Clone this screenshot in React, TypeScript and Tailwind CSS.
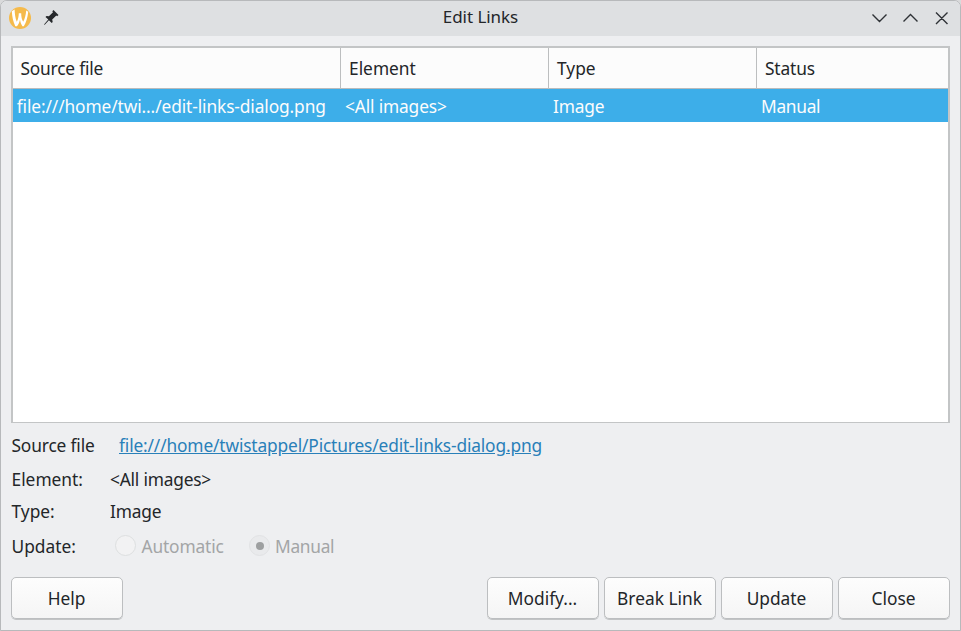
import type { ReactNode } from "react";

function Button({ children }: { children: ReactNode }) {
  return (
    <button className="h-[42px] w-[112px] rounded-[5px] border border-[#bcbec0] bg-linear-to-b from-[#fdfdfd] to-[#f5f5f5] pr-px pt-px leading-none shadow-[0_1px_0_#c2c4c5]">
      {children}
    </button>
  );
}

function AppIcon() {
  return (
    <svg width="22" height="22" viewBox="0 0 22 22">
      <circle cx="11" cy="11" r="11" fill="#f5ba4b" />
      <path
        d="M2.800 4.200L5.600 2.500C5.800 7 6.300 11 7.800 14.800C9.300 12 9.700 9 9.800 6.200H12.200C12.200 9.500 12.800 12.500 14.200 14.800C16 11.500 16.800 8 17.200 3.600L19.200 4.800C18.600 10.500 17.200 15.500 14.800 19.200H13.400C12 17.200 11.300 15 11 12.600C10.500 15.200 9.500 17.500 8 19.200H6.300C4.200 14.800 3.100 9.800 2.800 4.200Z"
        fill="#fff"
      />
    </svg>
  );
}

function TitleBar() {
  return (
    <header className="flex h-[35px] shrink-0 items-center bg-[#dee0e2] pb-[2px] pl-2 pr-[11px]">
      <div className="flex w-[120px] items-center gap-[13px]">
        <AppIcon />
        <svg width="15" height="15" viewBox="0 0 15 15" fill="#26292c">
          <path d="M9.500 0L14.500 5L13.100 6.200L12.300 5.600L8.200 9.600L8.700 12L7.700 13L4.900 10.300L1 14.600L0 15L0.400 14L4.300 9.600L1.500 7L2.500 6L4.900 6.200L9 2.200L8.300 1.300Z" />
        </svg>
      </div>
      <h1 className="grow pb-[2px] pl-[3px] text-center text-[17px] leading-none tracking-[-0.050px]">Edit Links</h1>
      <div className="flex w-[120px] justify-end">
        <svg width="78" height="16" viewBox="0 0 78 16" fill="none" stroke="#2e3236" strokeWidth="1.400">
          <path d="M1.500 4.500L8.500 11.500L15.500 4.500M32.500 11.500L39.500 4.500L46.500 11.500M65 2.500L76.500 14M76.500 2.500L65 14" />
        </svg>
      </div>
    </header>
  );
}

const columns = "grid grid-cols-[328px_208px_208px_1fr]";

export default function App() {
  return (
    <div className="h-[631px] w-[961px] bg-[#d9dadb]">
      <div className="flex h-full flex-col overflow-hidden rounded-t-[7px] border border-[#b7b9bb] bg-[#eeeff1] font-['Noto_Sans',sans-serif] text-[17.330px] text-[#232629]">
        <TitleBar />
        <main className="flex grow flex-col px-2.5 pt-2.5">
          <section className="h-[377px] w-[939px] shrink-0 border-2 border-b border-[#c3c5c6] bg-white">
            <div className={`${columns} h-[41px] border-b border-[#b9bbbc] bg-[#fcfcfc] leading-[41px]`}>
              <div className="border-r border-[#bcbebf] pl-[7.500px] tracking-[-0.200px]">Source file</div>
              <div className="border-r border-[#bcbebf] pl-2">Element</div>
              <div className="border-r border-[#bcbebf] pl-2">Type</div>
              <div className="pl-2 tracking-[-0.150px]">Status</div>
            </div>
            <div className={`${columns} h-[33px] bg-[#3daee9] leading-[34px] text-[#fcfcfc]`}>
              <div className="whitespace-nowrap pl-[3.700px] tracking-[-0.110px]">file:///home/twi.../edit-links-dialog.png</div>
              <div className="pl-1 tracking-[-0.150px]">&lt;All images&gt;</div>
              <div className="pl-1 tracking-[-0.150px]">Image</div>
              <div className="pl-1 tracking-[-0.300px]">Manual</div>
            </div>
          </section>
          <dl className="mt-1.5 grid grid-cols-[99px_1fr] grid-rows-[34px_33px_32px_38px] items-center leading-none">
            <dt className="pl-[0.500px] tracking-[-0.150px]">Source file</dt>
            <dd className="pl-[9px]">
              <a className="tracking-[-0.150px] text-[#2980b9] underline">file:///home/twistappel/Pictures/edit-links-dialog.png</a>
            </dd>
            <dt className="pl-[0.500px]">Element:</dt>
            <dd className="tracking-[-0.200px]">&lt;All images&gt;</dd>
            <dt className="pl-[0.500px]">Type:</dt>
            <dd className="tracking-[-0.150px]">Image</dd>
            <dt className="pl-[0.500px]">Update:</dt>
            <dd className="flex items-center pl-[5px] text-[#a3a5a6]">
              <span className="mb-[3px] mr-[5px] size-[21px] rounded-full border border-[#dddfe0] bg-[#f2f2f3]" />
              <span className="w-[108px] pl-[0.500px] tracking-[-0.150px]">Automatic</span>
              <span className="mb-[3px] mr-[5px] flex size-[21px] items-center justify-center rounded-full border border-[#e1e2e4] bg-[#e9eaec]">
                <span className="size-2 rounded-full bg-[#9d9fa0]" />
              </span>
              <span className="tracking-[-0.300px]">Manual</span>
            </dd>
          </dl>
          <footer className="mt-[11px] flex w-[939px] gap-[5px]">
            <Button>Help</Button>
            <div className="grow" />
            <Button>Modify...</Button>
            <Button>Break Link</Button>
            <Button>Update</Button>
            <Button>Close</Button>
          </footer>
        </main>
      </div>
    </div>
  );
}
